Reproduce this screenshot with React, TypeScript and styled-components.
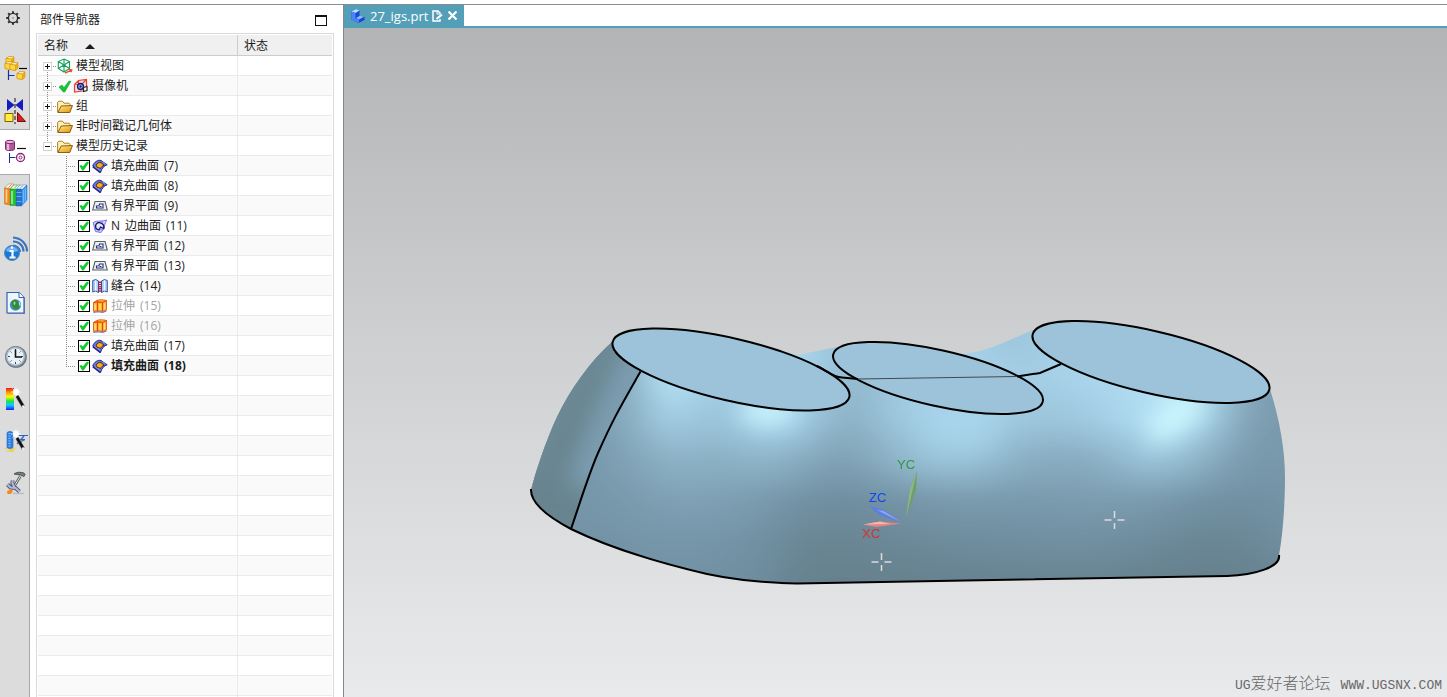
import React from "react";
import styled, { createGlobalStyle, css } from "styled-components";

const GlobalStyle = createGlobalStyle`
  * { box-sizing: border-box; }
  html, body, #root { height: 100%; margin: 0; }
  body {
    overflow: hidden;
    background: #fff;
    color: #1c1c1c;
    font: 12px/16px "Open Sans", "Noto Sans CJK SC", sans-serif;
  }
  button { font: inherit; color: inherit; border: 0; background: none; padding: 0; margin: 0; }
  svg { display: block; }
`;

/* ---------- frame ---------- */

const Page = styled.div`
  display: flex;
  height: 100%;
  border-top: 4px solid #fff;
`;

const Shell = styled.div`
  display: flex;
  flex: 1;
  min-width: 0;
  border-top: 1px solid #868c93;
`;

/* ---------- resource bar ---------- */

const Rail = styled.nav`
  display: flex;
  flex-direction: column;
  gap: 12px;
  width: 30px;
  flex: none;
  background: linear-gradient(to right, #dcdcdc 29px, #a9a9a9 29px);
`;

const RailGroup = styled.div`
  display: flex;
  flex-direction: column;
`;

const GearButton = styled.button`
  display: flex;
  align-items: center;
  padding-left: 5px;
  height: 26px;
  margin-bottom: 5px;
`;

const RailButton = styled.button<{ $active?: boolean }>`
  display: flex;
  align-items: center;
  justify-content: center;
  height: 42px;
  padding-left: 2px;
  ${(p) =>
    p.$active &&
    css`
      height: 46px;
      margin: -3px 0 -1px;
      background: #fff;
      border: solid #a9a9a9;
      border-width: 1px 0;
    `}
`;

/* ---------- navigator ---------- */

const Navigator = styled.section`
  display: flex;
  flex-direction: column;
  flex: none;
  width: 313px;
  background: #fff;
`;

const NavTitle = styled.header`
  display: flex;
  align-items: center;
  justify-content: space-between;
  height: 28px;
  flex: none;
  padding: 2px 16px 0 10px;
`;

const Title = styled.h1`
  margin: 0;
  font-size: 12px;
  font-weight: 400;
`;

const Frame = styled.div`
  display: flex;
  flex-direction: column;
  flex: 1;
  min-height: 0;
  margin: 0 9px 0 6px;
  padding: 1px 1px 0;
  border: 1px solid #dadada;
  border-bottom: 0;
  overflow: hidden;
`;

const Tree = styled.table`
  width: 100%;
  table-layout: fixed;
  border-spacing: 0;
  flex: none;
`;

const HeadCell = styled.th`
  height: 21px;
  padding: 2px 6px 0;
  background: #f0f0f0;
  border-bottom: 1px solid #cdcdcd;
  border-right: 1px solid #cdcdcd;
  font-weight: 400;
  text-align: left;
  &:first-child { width: 200px; }
  &:last-child { border-right: 0; }
`;

const HeadLabel = styled.span`
  display: flex;
  align-items: center;
  gap: 17px;
`;

const SortArrow = styled.i`
  border: solid transparent;
  border-width: 0 5px 5px;
  border-bottom-color: #1c1c1c;
`;

const Row = styled.tr`
  &:nth-child(even) { background: #fafafa; }
`;

const Cell = styled.td`
  height: 20px;
  padding: 0;
  box-shadow: inset 0 -1px #ebebeb;
  &:first-child { border-right: 1px solid #ebebeb; }
`;

const Item = styled.div<{ $child?: boolean }>`
  display: flex;
  align-items: center;
  height: 20px;
  padding-left: ${(p) => (p.$child ? 28 : 5)}px;
`;

const dotsDown = "repeating-linear-gradient(to bottom, #8c8c8c 0 1px, transparent 1px 2px)";
const dotsRight = "repeating-linear-gradient(to right, #8c8c8c 0 1px, transparent 1px 2px)";

const Guide = styled.span<{ $edge?: "first" | "last" }>`
  display: flex;
  align-items: center;
  width: 14px;
  height: 20px;
  flex: none;
  background:
    ${dotsDown} 4px ${(p) => (p.$edge === "first" ? 10 : 0)}px / 1px ${(p) => (p.$edge ? 10 : 20)}px no-repeat,
    ${dotsRight} 4px 10px / 10px 1px no-repeat;
`;

const Branch = styled.span<{ $last?: boolean }>`
  width: 10px;
  height: 20px;
  flex: none;
  background:
    ${dotsDown} 0 0 / 1px ${(p) => (p.$last ? 10 : 20)}px no-repeat,
    ${dotsRight} 0 10px / 10px 1px no-repeat;
`;

const Expander = styled.button<{ $open?: boolean }>`
  width: 9px;
  height: 9px;
  margin-top: 1px;
  border: 1px solid #d4d4d4;
  background:
    linear-gradient(#111, #111) center / 5px 1px no-repeat,
    linear-gradient(#111, #111) center / 1px ${(p) => (p.$open ? 1 : 5)}px no-repeat,
    #fff;
`;

const CheckLabel = styled.label<{ $muted?: boolean; $bold?: boolean }>`
  display: flex;
  align-items: center;
  height: 20px;
  margin-left: 2px;
  color: ${(p) => (p.$muted ? "#a3a3a3" : "inherit")};
  font-weight: ${(p) => (p.$bold ? 700 : 400)};
`;

const Tick = styled.input`
  appearance: none;
  width: 12px;
  height: 12px;
  margin: 0;
  border: 1px solid #000;
  background: #fff;
  &:checked::before {
    content: "";
    display: block;
    height: 10px;
    background: #0fca2c;
    clip-path: polygon(4% 48%, 22% 40%, 38% 56%, 78% 8%, 96% 8%, 96% 22%, 46% 94%, 32% 94%);
  }
`;

const FeatureName = styled.span`
  display: flex;
  gap: 5px;
`;

const ItemIcon = styled.span<{ $check?: boolean }>`
  display: flex;
  flex: none;
  width: 16px;
  margin-left: ${(p) => (p.$check ? 2 : 0)}px;
  margin-right: 3px;
`;

const MarkIcon = styled.span`
  display: flex;
  width: 16px;
`;

const EmptyRows = styled.div`
  flex: 1;
  background:
    linear-gradient(#ebebeb, #ebebeb) 199px 0 / 1px 100% no-repeat,
    repeating-linear-gradient(#fff 0 19px, #ebebeb 19px 20px, #fafafa 20px 39px, #ebebeb 39px 40px);
`;

/* ---------- document window ---------- */

const Work = styled.main`
  display: flex;
  flex-direction: column;
  flex: 1;
  min-width: 0;
  border-left: 1px solid #82878c;
`;

const TabBar = styled.div`
  display: flex;
  flex: none;
  height: 23px;
  border-bottom: 2px solid #539fb8;
`;

const Tab = styled.div`
  display: flex;
  align-items: center;
  height: 21px;
  padding: 0 7px;
  background: #539fb8;
  color: #fff;
  font-size: 13px;
`;

const TabName = styled.button`
  display: flex;
  align-items: center;
  gap: 5px;
  margin-right: 4px;
`;

const TabClose = styled.button`
  margin-left: 5px;
`;

const Canvas = styled.div`
  position: relative;
  flex: 1;
  min-height: 0;
  background: linear-gradient(#b3b4b6, #cecfd0 46%, #e9eaeb);
`;

const Scene = styled.svg`
  width: 100%;
  height: 100%;
`;

const Watermark = styled.p`
  position: absolute;
  right: 5px;
  bottom: 1px;
  margin: 0;
  display: flex;
  align-items: center;
  gap: 10px;
  color: #686868;
  font: 13px/20px "Liberation Mono", "Noto Sans CJK SC", monospace;
`;

const WatermarkName = styled.span`
  font-size: 16px;
  font-weight: 300;
  small { font-size: 13px; }
`;

/* ---------- icons ---------- */

const Gear = () => (
  <svg width="16" height="16" viewBox="0 0 16 16" fill="none" stroke="#2d2d2d">
    <circle cx="8" cy="8" r="4.6" strokeWidth="1.4" />
    <path strokeWidth="2" d="M8 1.2v2M8 12.8v2M1.2 8h2M12.8 8h2M3.2 3.2l1.4 1.4M11.4 11.4l1.4 1.4M3.2 12.8l1.4-1.4M11.4 4.6l1.4-1.4" />
    <circle cx="8" cy="8" r="1" fill="#999" stroke="none" />
  </svg>
);

const Cube = ({ x, y }: { x: number; y: number }) => (
  <g transform={`translate(${x} ${y})`} stroke="#c98a00" strokeWidth=".5" strokeLinejoin="round">
    <path d="M0 2.500L3 .5l5 .5v5L5.500 8.500 0 7.500z" fill="#f6ab12" />
    <path d="M0 2.500L3 .5l5 .5L5.500 3z" fill="#fff3b0" />
    <path d="M0 2.500L5.500 3v5.500L0 7.500z" fill="#ffd63f" />
  </g>
);

const Assembly = () => (
  <svg width="24" height="26" viewBox="0 0 24 26">
    <Cube x={2} y={0} />
    <Cube x={1} y={5} />
    <Cube x={6} y={6} />
    <path d="M15 12.500h8" stroke="#000" strokeWidth="1.200" />
    <path d="M4.500 14v10M4.500 19.500h6" stroke="#1c2fa0" fill="none" strokeWidth="1.200" />
    <Cube x={13} y={15} />
  </svg>
);

const Constraint = () => (
  <svg width="24" height="26" viewBox="0 0 24 26">
    <path d="M3 1l7.500 6L3 13zM19 1l-7.500 6 7.500 6z" fill="#1719c4" />
    <path d="M11 0v26" stroke="#111" strokeDasharray="4 2" />
    <path d="M1 15.500h8v8H1z" fill="#fff23c" stroke="#8a5a00" />
    <path d="M13.500 14.500v9h8z" fill="#d81f1f" stroke="#7e0808" />
  </svg>
);

const PartTree = () => (
  <svg width="24" height="26" viewBox="0 0 24 26">
    <path d="M1.500 3v7c0 2 9 2 9 0V3z" fill="#b3559c" stroke="#7d2a6b" />
    <path d="M4 4v7" stroke="#e9b5dc" strokeWidth="2.500" />
    <ellipse cx="6" cy="3" rx="4.500" ry="1.700" fill="#e9b5dc" stroke="#7d2a6b" />
    <path d="M13 9.500h9" stroke="#111" strokeWidth="1.200" />
    <path d="M5.500 14v10M5.500 18.500h6" stroke="#1c2fa0" fill="none" />
    <circle cx="16.500" cy="18.500" r="4" fill="#fff" stroke="#8c2273" strokeWidth="1.300" />
    <circle cx="16.500" cy="18.500" r="1.500" fill="none" stroke="#8c2273" />
  </svg>
);

const Books = () => (
  <svg width="24" height="24" viewBox="0 0 24 24">
    <g strokeWidth=".4">
      <path d="M12 6l4-4h7l-5 5z" fill="#f5f9ff" stroke="#2c62a8" />
      <path d="M17.500 7L23 2v15l-5.500 6z" fill="#3d9af5" stroke="#0c57ad" />
      <path d="M12 6h5.500v17H12z" fill="#2472cc" stroke="#0c4b99" />
      <path d="M6 6l4-4h6l-4 4.500z" fill="#eefbee" stroke="#167a22" />
      <path d="M6 6h6v16.500H6z" fill="#26c03a" stroke="#0d7f1b" />
      <path d="M.5 5l4-4H10L6 5.500z" fill="#fff4e2" stroke="#9a5407" />
      <path d="M.5 5L6 6v16l-5.500-1z" fill="#ef8a20" stroke="#b4560a" />
    </g>
    <path d="M4.500 4.500l3-3" stroke="#a8682c" strokeWidth=".7" />
    <path d="M10.500 5l3-3" stroke="#1d9a2e" strokeWidth=".7" />
    <path d="M16 5.500l3-3" stroke="#2c72c0" strokeWidth=".7" />
    <path d="M2.500 6.500v13" stroke="#ffd493" strokeWidth="1.500" />
    <path d="M8 8v13" stroke="#9df5a2" strokeWidth="1.500" />
    <path d="M12.500 9.500h5M12.500 13.500h5M12.500 18.500h5" stroke="#8cc3ff" strokeWidth=".7" />
    <path d="M19.500 7v13M21.500 5v13" stroke="#6bb8ff" />
  </svg>
);

const InfoFeed = () => (
  <svg width="24" height="26" viewBox="0 0 24 26">
    <g fill="none" stroke="#3a74ba" strokeWidth="2.200">
      <path d="M9 9.500c3 0 7 2.500 7 6.500" />
      <path d="M9 5.500c6 0 10.500 4 10.500 10" />
      <path d="M9 1.500c8 .5 14 6 14 14" />
    </g>
    <circle cx="8" cy="17" r="7.500" fill="#1a78d6" stroke="#5c86b4" />
    <path d="M2 15c1-6 11-6 12 0-3 1.500-9 1.500-12 0z" fill="#67b5fa" />
    <path d="M8 10.500v2.300M5.500 15H8.500v6M5.500 21.500h6" stroke="#fff" strokeWidth="2.200" fill="none" />
  </svg>
);

const WebPage = () => (
  <svg width="20" height="24" viewBox="0 0 20 24">
    <path d="M2 2h12l5 5v16H2z" fill="#8a93a8" />
    <path d="M1 1.500h12l5 5V22H1z" fill="#f0f6ff" stroke="#2e63b4" strokeWidth="1.200" />
    <path d="M13 1.500v5h5" fill="#fff" stroke="#2e63b4" />
    <circle cx="9.500" cy="14" r="5.700" fill="#5189cc" />
    <path d="M5.500 11c2-3 5-2.500 6-1s1 3 2 5-3 4.500-5 3-3.500-4-3-7z" fill="#2c8f34" />
    <path d="M8 10.500c1.500 0 2 1.500 1 3s-2-1-1-3z" fill="#a5d8a0" />
    <path d="M13 10.500c1.500 1 2 3 1.300 5-1.500-1-1.500-3-1.300-5z" fill="#b8dcf5" />
  </svg>
);

const Clock = () => (
  <svg width="24" height="24" viewBox="0 0 24 24">
    <circle cx="12" cy="12" r="10.800" fill="#68717d" />
    <circle cx="11.500" cy="11.500" r="10" fill="#aebccb" stroke="#7d8793" />
    <circle cx="11.500" cy="11.500" r="8" fill="#e9f2fb" />
    <path d="M11.500 4v2M11.500 17v2M4 11.500h2M17 11.500h2M6.500 6.500l1 1M16.500 6.500l-1 1M6.500 16.500l1-1M16.500 16.500l-1-1" stroke="#3b4654" />
    <path d="M11.500 4.500v7.500H18" stroke="#111" strokeWidth="1.600" fill="none" />
  </svg>
);

const Wand = ({ x }: { x: number }) => (
  <g transform={`translate(${x} 0)`}>
    <path d="M5 0v10M0 5h10M1.500 1.500l7 7M8.500 1.500l-7 7" stroke="#fff" strokeOpacity=".8" />
    <circle cx="5" cy="5" r="3" fill="#fff" />
    <path d="M6 9l6.500 11" stroke="#9a9a9a" strokeWidth="3.600" />
    <path d="M6 9l6 10" stroke="#111" strokeWidth="2.600" />
    <path d="M11.500 18.500l1.500 2.500" stroke="#eee" strokeWidth="2" />
  </g>
);

const ColorWand = () => (
  <svg width="22" height="24" viewBox="0 0 22 24">
    <defs>
      <linearGradient id="spectrum" x2="0" y2="1">
        <stop stopColor="#f01818" />
        <stop offset=".22" stopColor="#ffa100" />
        <stop offset=".4" stopColor="#f6ff00" />
        <stop offset=".6" stopColor="#17e04d" />
        <stop offset=".78" stopColor="#14c8ff" />
        <stop offset="1" stopColor="#1420f0" />
      </linearGradient>
    </defs>
    <path d="M1 1h8v22H1z" fill="url(#spectrum)" />
    <Wand x={6} />
  </svg>
);

const PartWand = () => (
  <svg width="24" height="24" viewBox="0 0 24 24">
    <path d="M1 20l3-2 3 3 4-2M3 22h7" stroke="#f0d040" strokeWidth="1.500" fill="none" />
    <path d="M3 4c0-2 6-2 6 0v14c0 2-6 2-6 0z" fill="#2b7fe0" stroke="#2a66bf" strokeWidth=".6" />
    <path d="M5.500 4v14" stroke="#8ec5ff" strokeWidth="2" strokeDasharray="1 1.500" />
    <path d="M11 6.500h13M12 10.500h9M13 14.500l8-4M20 7l-7 8" stroke="#2a66bf" strokeWidth="1.200" fill="none" />
    <Wand x={7} />
  </svg>
);

const Tools = () => (
  <svg width="22" height="24" viewBox="0 0 22 24">
    <path d="M8 22.500h11" stroke="#bdbdbd" strokeWidth="1.500" />
    <path d="M15.500 5L10 14" stroke="#555e5a" strokeWidth="2.600" />
    <path d="M15.500 5L10 14" stroke="#e4e8e6" />
    <path d="M9 3c3-2 5-2 7-1.500l3 .5 1 1.500-1 2-3-1.500C13 3.500 11 3.500 9 3z" fill="#7b8580" stroke="#333b37" strokeWidth=".8" />
    <path d="M2.500 13.500l3 3 5 .5 4 3.500M7.500 9.500v3l2 4" stroke="#555a7a" strokeWidth="4" fill="none" />
    <path d="M2.500 13.500l3 3 5 .5 4 3.500M7.500 9.500v3l2 4" stroke="#b4b9d3" strokeWidth="2" fill="none" />
    <path d="M2 20l4-1.500 2 1.500-2 3H2.500z" fill="#f7881c" />
  </svg>
);

const ModelViews = () => (
  <svg width="16" height="16" viewBox="0 0 16 16" fill="none">
    <path d="M7 1l5.500 2.500v7L7 14l-5.700-3.500v-7zM7 1v13M1.300 3.500L7 7l5.500-3.500M1.300 10.500L7 7l5.500 3.500" stroke="#17a05c" strokeWidth="1.100" />
    <path d="M8 15.200l6.500-3M12 11.500l2.800.5-1 2.300" stroke="#f04a2c" strokeWidth="1.400" />
  </svg>
);

const GreenMark = () => (
  <svg width="16" height="16" viewBox="0 0 16 16">
    <path d="M2 9l2.800-2L7 9.500 12 3l2 .3L7.800 14H6.200z" fill="#12c832" stroke="#0b9a24" strokeWidth=".5" />
  </svg>
);

const Camera = () => (
  <svg width="16" height="16" viewBox="0 0 16 16" fill="none">
    <path d="M1.500 6.500l4-4 8-1v8l-4 4.500-8-.5z" fill="#ecdfe6" />
    <path d="M1.500 6.500l4-4 8-1v8M1.500 6.500v7.500l8-1M1.500 6.500l8-1 4-4M5.500 2.500v4" stroke="#ea4028" strokeWidth="1.200" />
    <circle cx="7.500" cy="8.500" r="3" fill="#8c98e8" stroke="#1c1d76" strokeWidth="1.300" />
    <circle cx="7.500" cy="8.500" r="1" fill="#111" />
    <path d="M10.500 9.500l3.500-1v4l-3.500 1z" fill="#fff" stroke="#222" strokeWidth="1.200" />
  </svg>
);

const Folder = () => (
  <svg width="16" height="16" viewBox="0 0 16 16">
    <defs>
      <linearGradient id="flap" x1="0" y1="0" x2="1" y2="1">
        <stop stopColor="#ffef90" />
        <stop offset="1" stopColor="#e08f08" />
      </linearGradient>
    </defs>
    <path d="M.6 14V4.500L2 3.200h3.500l1.500 2h5l1 1V9" fill="#fdf0b4" stroke="#a87412" strokeWidth=".9" />
    <path d="M.8 14.500L4.200 8l11.300-.5-2.700 7z" fill="url(#flap)" stroke="#7d5008" strokeWidth=".9" />
  </svg>
);

const FillSurface = () => (
  <svg width="16" height="16" viewBox="0 0 16 16">
    <path d="M.8 8C2 4 6 1.500 9 2.500l6.200 4.300c-3 .7-5.500 3.500-6.700 7.700z" fill="#6a76d6" stroke="#23298c" />
    <path d="M.8 8.500l7.700 6" stroke="#23298c" strokeWidth="1.600" />
    <path d="M4.200 7.200C5 5 7.500 4 9 4.700l3.200 2.500c-1.700.5-3 1.700-3.700 3.300L6.500 9.500l-1 .5z" fill="#ffa818" stroke="#2a2008" strokeWidth=".8" />
    <path d="M2.500 8.500l5.500 4M10.500 3.500l3 2.500" stroke="#a9b5ff" strokeWidth=".7" />
  </svg>
);

const BoundedPlane = () => (
  <svg width="16" height="16" viewBox="0 0 16 16">
    <path d="M3 3.500h10l2.300 8.500H.7z" fill="#eaf0ee" stroke="#566060" strokeWidth="1.100" />
    <path d="M4.500 10v-2l2.500-.3.500-1.700h3.500v4z" fill="#fff" stroke="#2a2c80" strokeWidth="1.100" />
    <path d="M7.500 8.500h2" stroke="#2a2c80" />
  </svg>
);

const NSided = () => (
  <svg width="16" height="16" viewBox="0 0 16 16">
    <path d="M1.200 4.500C5 2 10 4 14.800 2c-2 3-2.500 6-2.300 8L9 14.500l-5.500-1z" fill="#cdd2ff" stroke="#7c70f0" />
    <path d="M5.500 3.500l.5 10M10 3v10M1.500 8h11M2 11.500h9" stroke="#8d84f5" strokeWidth=".8" />
    <path d="M4 10.500C2.500 6 5.500 4 8.500 4.800c2.800.8 3.700 3 3.200 5.700L8.500 9 7 12z" fill="#dfe4ff" stroke="#131654" strokeWidth="1.200" />
  </svg>
);

const Sew = () => (
  <svg width="16" height="16" viewBox="0 0 16 16">
    <path d="M.7 2.500l3-1L6.500 3v11.500L3.700 13l-3 1zM9.500 3l3-1.500 2.800 1V14l-2.800-1-3 1.500z" fill="#a9cdf7" stroke="#264a9c" strokeWidth=".9" />
    <path d="M3.700 2.500v10M12.500 2.500v10" stroke="#f2f8ff" strokeWidth="1.400" />
    <path d="M6.500 3v11.500M9.500 3v11.500" stroke="#34478c" strokeWidth=".7" />
    <path d="M8 3.500v11" stroke="#db1830" strokeWidth="2.200" strokeDasharray="1.500 .7" />
  </svg>
);

const Extrude = () => (
  <svg width="16" height="16" viewBox="0 0 16 16">
    <path d="M1.500 4.500L5 2.500c2-1 6-1 9.500 0v9.500l-4 1.500c-3-.8-6-.8-9 0z" fill="#ffb62c" stroke="#df5a1c" strokeWidth=".9" />
    <path d="M1.500 4.500c3-.8 6-.8 9 0l4-2M5 2.500l1 1.300M10.500 4.500v9M5.500 4.200v9" fill="none" stroke="#df4a14" strokeWidth="1.100" />
    <path d="M3.200 6v6M8 6v6M12.500 5.500v6" stroke="#ffe27a" strokeWidth="1.300" />
    <path d="M1.500 14.500c3-.8 6-.8 9 0l4-1.500" stroke="#4a58b8" fill="none" strokeWidth=".9" />
  </svg>
);

const MaximizeGlyph = () => (
  <svg width="12" height="11" viewBox="0 0 12 11">
    <path d="M0 0h12v11H0zM1 2v8h10V2z" fill="#111" fillRule="evenodd" />
  </svg>
);

const PartGlyph = () => (
  <svg width="14" height="14" viewBox="0 0 14 14">
    <path d="M.5 2.500L5 0l3.500 1.500V7l5 .5v3.500L7.500 14l-7-3.500z" fill="#1c45d0" />
    <path d="M.5 2.500L5 0l3.500 1.500L4.500 4z" fill="#b9dcff" />
    <path d="M5 9l3.500-2 5 .5-5.500 3z" fill="#8dbeff" />
    <path d="M.5 2.500l4 1.500v5.500l3.500 1V14l-7.500-3.500z" fill="#4587f7" />
  </svg>
);

const EditedGlyph = () => (
  <svg width="11" height="12" viewBox="0 0 11 12" fill="none" stroke="#fff" strokeWidth="1.500">
    <path d="M8 4V3L6 1H1v10h7V9" />
    <path d="M5 1v3h3" strokeWidth="1" />
    <path d="M4.500 9l5.500-4.500" strokeWidth="2.200" />
  </svg>
);

const CloseGlyph = () => (
  <svg width="9" height="9" viewBox="0 0 9 9" stroke="#fff" strokeWidth="2.200">
    <path d="M.5.5l8 8M8.500.5l-8 8" />
  </svg>
);

/* ---------- shaded model ---------- */

const RAMP: [number, number[]][] = [
  [0, [101, 127, 139]],
  [35, [115, 147, 166]],
  [55, [137, 173, 193]],
  [70, [155, 196, 218]],
  [85, [171, 215, 239]],
  [100, [204, 248, 255]],
];

function shade(level: number) {
  const i = Math.max(1, RAMP.findIndex(([stop]) => stop >= level));
  const [a, from] = RAMP[i - 1];
  const [b, to] = RAMP[i];
  const k = (level - a) / (b - a);
  return `rgb(${from.map((v, n) => Math.round(v + (to[n] - v) * k)).join(",")})`;
}

/* light level down each vertical strip of the skin, from y 340 to y 580 */
const STRIPS: number[][] = [
  [35, 38, 38, 38, 37, 34, 28],
  [45, 45, 46, 43, 39, 35, 30],
  [65, 64, 60, 50, 42, 37, 32],
  [86, 92, 78, 58, 46, 37, 32],
  [82, 82, 70, 57, 46, 37, 32],
  [80, 76, 71, 57, 44, 36, 28],
  [86, 88, 84, 60, 41, 31, 24],
  [86, 88, 84, 57, 36, 18, 8],
  [75, 74, 66, 48, 28, 12, 3],
  [70, 62, 56, 46, 27, 12, 3],
  [72, 68, 66, 54, 32, 16, 4],
  [80, 80, 76, 64, 37, 18, 5],
  [80, 82, 82, 70, 40, 22, 6],
  [80, 82, 83, 70, 41, 24, 7],
  [72, 80, 78, 62, 40, 26, 8],
  [72, 76, 71, 55, 40, 28, 9],
  [82, 80, 71, 54, 41, 30, 10],
  [85, 83, 75, 55, 42, 29, 10],
  [86, 86, 82, 62, 42, 27, 8],
  [88, 89, 89, 70, 41, 23, 4],
  [88, 92, 91, 66, 37, 16, 2],
  [82, 86, 78, 54, 33, 12, 2],
  [58, 58, 50, 42, 31, 14, 3],
  [42, 42, 41, 38, 32, 22, 8],
  [36, 38, 40, 40, 37, 30, 20],
];

const BODY =
  "M531 493C531 490 532 485 532 487C536 470 548 436 557 417C570 390 590 361 613 341L700 335L797 355L837 347L900 345L960 354C985 353 1005 342 1033 330L1150 340L1269 386C1280 420 1285 450 1285 477C1285 510 1282 540 1279 555C1280 566 1262 575 1227 576L797 583.500C770 583 735 580 707 574C660 563 610 548 571 529C553 518 532 504 531 493Z";
const BOTTOM =
  "M531 489C530 504 552 519 571 529C610 548 660 563 707 574C735 580 770 583 797 583.500L1227 576C1255 575 1281 567 1279 555";
const SEAM = "M640.500 371.500C622 404 614 417 598 453C588 476 581 500 571 529";

const Outline = styled.path`
  fill: none;
  stroke: #000;
  stroke-width: 2;
`;

const AxisName = styled.text`
  font: 13px "Liberation Sans", sans-serif;
`;

const Cap = ({ x, y, rx, ry, angle }: { x: number; y: number; rx: number; ry: number; angle: number }) => (
  <ellipse rx={rx} ry={ry} transform={`translate(${x} ${y}) rotate(${angle})`} fill="#9cc3da" stroke="#000" strokeWidth="2" />
);

const Cross = ({ x, y }: { x: number; y: number }) => (
  <path transform={`translate(${x} ${y})`} d="M-10 0h7M3 0h7M0-9v7M0 3v6" stroke="#dcdcdc" strokeWidth="1.500" />
);

const Model = () => (
  <Scene viewBox="344 28 1103 669" role="img" aria-label="27_igs.prt">
    <defs>
      <clipPath id="body"><path d={BODY} /></clipPath>
      <clipPath id="side"><path d="M641 371L613 300L500 340V540L571 529C581 500 588 476 598 453C614 417 622 404 641 371Z" /></clipPath>
      <filter id="blend" x="-10%" y="-10%" width="120%" height="120%"><feGaussianBlur stdDeviation="17 5" /></filter>
      <filter id="soft" x="-50%" y="-50%" width="200%" height="200%"><feGaussianBlur stdDeviation="11" /></filter>
      {STRIPS.map((levels, i) => (
        <linearGradient key={i} id={`strip${i}`} gradientUnits="userSpaceOnUse" x1="0" x2="0" y1="340" y2="580">
          {levels.map((level, n) => (
            <stop key={n} offset={n / 6} stopColor={shade(level)} />
          ))}
        </linearGradient>
      ))}
    </defs>
    <g clipPath="url(#body)">
      <g filter="url(#blend)">
        <rect x="480" y="290" width="90" height="330" fill="url(#strip0)" />
        {STRIPS.map((_, i) => (
          <rect key={i} x={565 + i * 30} y="290" width="31" height="330" fill={`url(#strip${i})`} />
        ))}
        <rect x="1314" y="290" width="60" height="330" fill="url(#strip24)" />
      </g>
      <g filter="url(#soft)">
        <ellipse rx="36" ry="15" transform="translate(1176 416) rotate(-42)" fill="#cdf8ff" fillOpacity=".85" />
        <ellipse cx="767" cy="410" rx="26" ry="15" fill="#cdf9ff" fillOpacity=".8" />
        <ellipse cx="960" cy="434" rx="40" ry="9" fill="#a9d8f0" fillOpacity=".7" />
      </g>
      <g clipPath="url(#side)">
        <path d="M500 300h180v260H500z" fill="#68848f" />
        <g filter="url(#soft)" fill="none">
          <path d="M652 345C626 390 610 425 588 490" stroke="#7c9db0" strokeWidth="44" />
          <path d="M612 334C575 370 550 415 532 470" stroke="#7391a0" strokeWidth="10" />
        </g>
      </g>
    </g>
    <Outline d={BOTTOM} />
    <Outline d={SEAM} />
    <Cap x={938} y={378} rx={107.4} ry={27.9} angle={12.65} />
    <Cap x={731} y={369.5} rx={121.5} ry={31.1} angle={13.1} />
    <Cap x={1151} y={362} rx={121.5} ry={31.1} angle={13.1} />
    <path d="M858 379L1017 376.500" stroke="#3f4a50" />
    <Outline d="M817 366C828 371 832 377 842 377.500L858 379M1017 376.500L1040 373L1061 364" />

    <path d="M901.500 523.500L880 521.500L863 524.500L876 527Z" fill="#e58484" />
    <path d="M880 521.500L863 524.500L890 524Z" fill="#f5b3b3" />
    <path d="M901.500 522.500L884 510L869 505.500L879 515Z" fill="#5f7fe0" />
    <path d="M901.500 522.500L884 511L877 510Z" fill="#8ea7f2" />
    <path d="M906 518L910 489L917 471L916 490Z" fill="#6f9e6c" />
    <path d="M906 518L910 489L917 471Z" fill="#8fb887" />
    <AxisName x="862" y="538" fill="#d43030">XC</AxisName>
    <AxisName x="869" y="502" fill="#1247f0">ZC</AxisName>
    <AxisName x="897" y="469" fill="#2e9a3c">YC</AxisName>
    <Cross x={881.5} y={562} />
    <Cross x={1114.5} y={520} />
  </Scene>
);

/* ---------- data ---------- */

const RAIL: { name: string; Icon: React.FC; active?: boolean }[][] = [
  [
    { name: "装配导航器", Icon: Assembly },
    { name: "约束导航器", Icon: Constraint },
    { name: "部件导航器", Icon: PartTree, active: true },
    { name: "重用库", Icon: Books },
  ],
  [{ name: "HD3D 工具", Icon: InfoFeed }],
  [{ name: "Web 浏览器", Icon: WebPage }],
  [
    { name: "历史记录", Icon: Clock },
    { name: "系统材料", Icon: ColorWand },
    { name: "加工向导", Icon: PartWand },
    { name: "角色", Icon: Tools },
  ],
];

const GROUPS: { name: string; Icon: React.FC; marked?: boolean; open?: boolean }[] = [
  { name: "模型视图", Icon: ModelViews },
  { name: "摄像机", Icon: Camera, marked: true },
  { name: "组", Icon: Folder },
  { name: "非时间戳记几何体", Icon: Folder },
  { name: "模型历史记录", Icon: Folder, open: true },
];

const FEATURES: { name: string; Icon: React.FC; muted?: boolean; bold?: boolean }[] = [
  { name: "填充曲面 (7)", Icon: FillSurface },
  { name: "填充曲面 (8)", Icon: FillSurface },
  { name: "有界平面 (9)", Icon: BoundedPlane },
  { name: "N 边曲面 (11)", Icon: NSided },
  { name: "有界平面 (12)", Icon: BoundedPlane },
  { name: "有界平面 (13)", Icon: BoundedPlane },
  { name: "缝合 (14)", Icon: Sew },
  { name: "拉伸 (15)", Icon: Extrude, muted: true },
  { name: "拉伸 (16)", Icon: Extrude, muted: true },
  { name: "填充曲面 (17)", Icon: FillSurface },
  { name: "填充曲面 (18)", Icon: FillSurface, bold: true },
];

export default function App() {
  return (
    <Page>
      <GlobalStyle />
      <Shell>
        <Rail>
          <GearButton aria-label="设置"><Gear /></GearButton>
          {RAIL.map((group, i) => (
            <RailGroup key={i}>
              {group.map(({ name, Icon, active }) => (
                <RailButton key={name} aria-label={name} $active={active}><Icon /></RailButton>
              ))}
            </RailGroup>
          ))}
        </Rail>

        <Navigator>
          <NavTitle>
            <Title>部件导航器</Title>
            <button aria-label="最大化"><MaximizeGlyph /></button>
          </NavTitle>
          <Frame>
            <Tree>
              <thead>
                <tr>
                  <HeadCell><HeadLabel>名称<SortArrow /></HeadLabel></HeadCell>
                  <HeadCell>状态</HeadCell>
                </tr>
              </thead>
              <tbody>
                {GROUPS.map(({ name, Icon, marked, open }, i) => (
                  <Row key={name}>
                    <Cell>
                      <Item>
                        <Guide $edge={i === 0 ? "first" : open ? "last" : undefined}>
                          <Expander $open={open} aria-label={name} aria-expanded={!!open} />
                        </Guide>
                        {marked && <MarkIcon><GreenMark /></MarkIcon>}
                        <ItemIcon><Icon /></ItemIcon>
                        {name}
                      </Item>
                    </Cell>
                    <Cell />
                  </Row>
                ))}
                {FEATURES.map(({ name, Icon, muted, bold }, i) => (
                  <Row key={name}>
                    <Cell>
                      <Item $child>
                        <Branch $last={i === FEATURES.length - 1} />
                        <CheckLabel $muted={muted} $bold={bold}>
                          <Tick type="checkbox" defaultChecked />
                          <ItemIcon $check><Icon /></ItemIcon>
                          <FeatureName>
                            {name.split(" ").map((part) => <span key={part}>{part}</span>)}
                          </FeatureName>
                        </CheckLabel>
                      </Item>
                    </Cell>
                    <Cell />
                  </Row>
                ))}
              </tbody>
            </Tree>
            <EmptyRows />
          </Frame>
        </Navigator>

        <Work>
          <TabBar>
            <Tab>
              <TabName><PartGlyph />27_igs.prt</TabName>
              <EditedGlyph />
              <TabClose aria-label="关闭"><CloseGlyph /></TabClose>
            </Tab>
          </TabBar>
          <Canvas>
            <Model />
            <Watermark>
              <WatermarkName><small>UG</small>爱好者论坛</WatermarkName>
              WWW.UGSNX.COM
            </Watermark>
          </Canvas>
        </Work>
      </Shell>
    </Page>
  );
}
